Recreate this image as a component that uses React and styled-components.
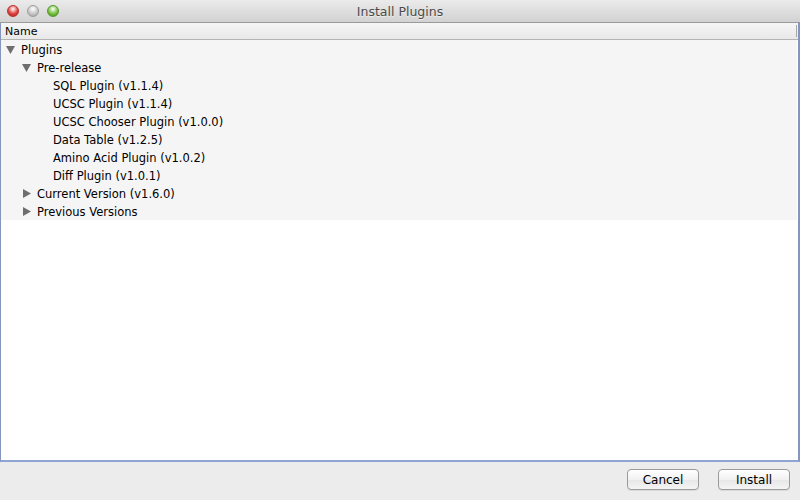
import React from 'react'
import styled, { createGlobalStyle } from 'styled-components'

const GlobalStyle = createGlobalStyle`
  html, body { margin: 0; padding: 0; }
  body {
    width: 800px;
    height: 500px;
    overflow: hidden;
    font-family: "DejaVu Sans", "Liberation Sans", sans-serif;
    background: #ececec;
  }
`

const Window = styled.div`
  width: 800px;
  height: 500px;
  display: flex;
  flex-direction: column;
  background: #ececec;
`

const TitleBar = styled.div`
  height: 22px;
  flex: none;
  position: relative;
  display: flex;
  align-items: center;
  justify-content: center;
  background: linear-gradient(#ebebeb, #d2d2d2);
  border-bottom: 1px solid #9a9a9a;
  font-size: 12.5px;
  color: #4a4a4a;
  text-shadow: 0 1px 0 rgba(255,255,255,0.6);
`

const Lights = styled.div`
  position: absolute;
  left: 7px;
  top: 5px;
  display: flex;
  gap: 8px;
`

const Light = styled.span`
  width: 12px;
  height: 12px;
  border-radius: 50%;
  box-sizing: border-box;
  border: 1px solid ${p => p.$edge};
  background: radial-gradient(circle at 50% 30%, #ffffff 0%, ${p => p.$color} 55%, ${p => p.$dark} 100%);
`

const Panel = styled.div`
  flex: 1;
  display: flex;
  flex-direction: column;
  background: #ffffff;
  border-left: 1px solid #8496bd;
  border-right: 2px solid #8496bd;
  border-bottom: 2px solid #8ea4d4;
`

const Header = styled.div`
  height: 16px;
  flex: none;
  display: flex;
  align-items: center;
  padding-left: 4px;
  background: linear-gradient(#f6f6f6, #e8e8e8);
  border-bottom: 1px solid #b4b4b4;
  font-size: 11px;
  color: #000;
  position: relative;
`

const HeaderEdge = styled.span`
  position: absolute;
  right: 1px;
  top: 2px;
  width: 1px;
  height: 12px;
  background: #a8a8a8;
`

const Tree = styled.div`
  background: #f5f5f5;
  margin-right: 1px;
`

const Row = styled.div`
  height: 18px;
  box-sizing: border-box;
  padding-top: 1px;
  display: flex;
  align-items: center;
  padding-left: ${p => 4 + p.$level * 16}px;
  font-size: 11.5px;
  color: #000;
`

const Toggle = styled.span`
  width: 16px;
  flex: none;
  display: flex;
  align-items: center;
  padding-left: 1px;
  box-sizing: border-box;
`

const Footer = styled.div`
  height: 38px;
  flex: none;
  box-sizing: border-box;
  display: flex;
  align-items: flex-start;
  justify-content: flex-end;
  gap: 19px;
  padding: 7px 10px 0 0;
  background: #ececec;
`

const Button = styled.button`
  width: 72px;
  height: 21px;
  box-sizing: border-box;
  border: 1px solid #9a9a9a;
  border-radius: 4px;
  background: linear-gradient(#ffffff, #f1f1f1 50%, #e6e6e6 51%, #f4f4f4);
  box-shadow: 0 1px 0 rgba(0,0,0,0.08);
  font-family: "DejaVu Sans", sans-serif;
  font-size: 12px;
  color: #000;
  padding: 0;
`

const Arrow = ({ open }) => (
  <svg width="9" height="9" viewBox="0 0 9 9">
    {open
      ? <polygon points="0,1 9,1 4.5,9" fill="#6e6e6e" />
      : <polygon points="1,0 9,4.5 1,9" fill="#6e6e6e" />}
  </svg>
)

const rows = [
  { level: 0, label: 'Plugins', toggle: 'open' },
  { level: 1, label: 'Pre-release', toggle: 'open' },
  { level: 2, label: 'SQL Plugin (v1.1.4)' },
  { level: 2, label: 'UCSC Plugin (v1.1.4)' },
  { level: 2, label: 'UCSC Chooser Plugin (v1.0.0)' },
  { level: 2, label: 'Data Table (v1.2.5)' },
  { level: 2, label: 'Amino Acid Plugin (v1.0.2)' },
  { level: 2, label: 'Diff Plugin (v1.0.1)' },
  { level: 1, label: 'Current Version (v1.6.0)', toggle: 'closed' },
  { level: 1, label: 'Previous Versions', toggle: 'closed' },
]

const App = () => {
  return (
    <Window>
      <GlobalStyle />
      <TitleBar>
        <Lights>
          <Light $color="#e0443e" $dark="#a8201a" $edge="#b8322c" />
          <Light $color="#c8c8c8" $dark="#9a9a9a" $edge="#9c9c9c" />
          <Light $color="#7ac142" $dark="#3f8a1c" $edge="#4f9a2a" />
        </Lights>
        Install Plugins
      </TitleBar>
      <Panel>
        <Header>
          Name
          <HeaderEdge />
        </Header>
        <Tree>
          {rows.map(r => (
            <Row key={r.label} $level={r.level}>
              <Toggle>{r.toggle && <Arrow open={r.toggle === 'open'} />}</Toggle>
              {r.label}
            </Row>
          ))}
        </Tree>
      </Panel>
      <Footer>
        <Button>Cancel</Button>
        <Button>Install</Button>
      </Footer>
    </Window>
  )
}

export default App
